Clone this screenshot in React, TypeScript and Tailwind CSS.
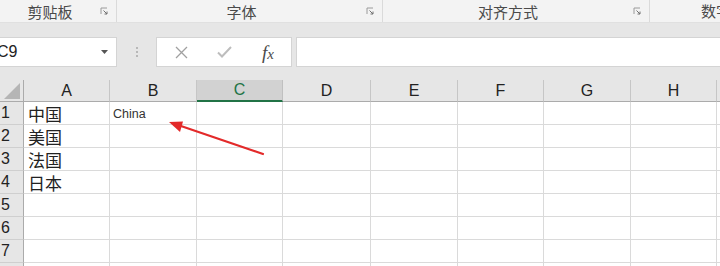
import React from 'react';

const COLS = [
  { name: 'A', w: 86 },
  { name: 'B', w: 87 },
  { name: 'C', w: 86 },
  { name: 'D', w: 88 },
  { name: 'E', w: 87 },
  { name: 'F', w: 86 },
  { name: 'G', w: 87 },
  { name: 'H', w: 86 },
  { name: '', w: 40 },
];

const ROWS: Record<number, { a?: string; b?: string }> = {
  1: { a: '中国', b: 'China' },
  2: { a: '美国' },
  3: { a: '法国' },
  4: { a: '日本' },
};

const cjk = { fontFamily: '"Noto Sans CJK SC", "Noto Sans", sans-serif' };
const latin = { fontFamily: '"Liberation Sans", Arial, sans-serif' };

// little dialog launcher in the corner of a ribbon group
const Launcher = () => (
  <svg width="9" height="9" viewBox="0 0 9 9" className="shrink-0">
    <path d="M1 7V1h6" fill="none" stroke="#9a9a9a" strokeWidth="1" />
    <path d="M3.5 3.5l3.5 3.5M7 4.5V7H4.5" fill="none" stroke="#707070" strokeWidth="1" />
  </svg>
);

const RibbonGroup: React.FC<{ label: string; w: number }> = ({ label, w }) => (
  <div className="flex items-center h-full border-r border-[#dadada] shrink-0 pr-[7px]" style={{ width: w }}>
    <div className="flex-1 text-center text-[15px] text-[#4a4a4a] leading-none" style={cjk}>{label}</div>
    <Launcher />
  </div>
);

export default function App() {
  return (
    <div className="relative w-[720px] h-[266px] overflow-hidden bg-[#e6e6e6]">
      {/* ribbon group labels */}
      <div className="flex h-[23px] bg-[#f3f3f3] border-b border-[#e0e0e0]">
        <RibbonGroup label="剪贴板" w={117} />
        <RibbonGroup label="字体" w={266} />
        <RibbonGroup label="对齐方式" w={267} />
        <div className="flex items-center h-full pl-[51px] text-[15px] text-[#4a4a4a] whitespace-nowrap" style={cjk}>数字</div>
      </div>

      {/* formula bar */}
      <div className="flex items-stretch h-[30px] mt-[14px]">
        <div className="w-[117px] bg-white border border-l-0 border-[#d4d4d4] flex items-center justify-between pr-[8px]">
          <span className="text-[16px] text-[#222] -ml-[3px]" style={latin}>C9</span>
          <svg width="7" height="4" viewBox="0 0 7 4"><path d="M0 0h7L3.5 4z" fill="#555" /></svg>
        </div>
        <div className="w-[39px] flex flex-col items-center justify-center gap-[2px]">
          <span className="w-[2px] h-[2px] bg-[#a8a8a8] rounded-full" />
          <span className="w-[2px] h-[2px] bg-[#a8a8a8] rounded-full" />
          <span className="w-[2px] h-[2px] bg-[#a8a8a8] rounded-full" />
        </div>
        <div className="w-[136px] bg-white border border-[#d4d4d4] flex items-center">
          <svg width="13" height="13" viewBox="0 0 13 13" className="ml-[18px]">
            <path d="M1 1l11 11M12 1L1 12" stroke="#a0a0a0" strokeWidth="1.3" />
          </svg>
          <svg width="15" height="12" viewBox="0 0 15 12" className="ml-[29px]">
            <path d="M1 6.5l4 4L14 1" fill="none" stroke="#bdbdbd" strokeWidth="2" />
          </svg>
          <span className="ml-[30px] text-[19px] italic text-[#4a4a4a] leading-none" style={{ fontFamily: '"Liberation Serif", serif' }}>
            f<span className="text-[15px]">x</span>
          </span>
        </div>
        <div className="flex-1 ml-[4px] bg-white border border-r-0 border-[#d4d4d4]" />
      </div>

      {/* sheet */}
      <div className="mt-[13px] bg-white">
        {/* column headers */}
        <div className="flex h-[22px]">
          <div className="w-[24px] shrink-0 bg-[#e6e6e6] border-r border-b border-[#ababab] relative">
            <svg width="16" height="16" viewBox="0 0 16 16" className="absolute right-[3px] bottom-[2px]">
              <path d="M16 0V16H0z" fill="#b5b5b5" />
            </svg>
          </div>
          {COLS.map((c) => (
            <div
              key={c.name || 'x'}
              className={
                c.name === 'C'
                  ? 'shrink-0 flex items-center justify-center bg-[#d2d2d2] border-r border-[#c0c0c0] border-b-2 border-b-[#217346] text-[#217346] text-[16px]'
                  : 'shrink-0 flex items-center justify-center bg-[#e6e6e6] border-r border-[#c6c6c6] border-b border-b-[#ababab] text-[#222] text-[16px]'
              }
              style={{ width: c.w, ...latin }}
            >
              {c.name}
            </div>
          ))}
        </div>

        {[1, 2, 3, 4, 5, 6, 7, 8].map((r) => (
          <div key={r} className="flex h-[23px]">
            <div className="w-[24px] shrink-0 bg-[#e6e6e6] border-r border-[#ababab] border-b border-b-[#cfcfcf] flex items-center pl-[1px] text-[16px] text-[#222]" style={latin}>
              {r < 8 ? r : ''}
            </div>
            {COLS.map((c) => (
              <div key={c.name || 'x'} className="shrink-0 border-r border-b border-[#dadada] flex items-end overflow-visible whitespace-nowrap" style={{ width: c.w }}>
                {c.name === 'A' && ROWS[r]?.a && (
                  <span className="pl-[4px] text-[17px] leading-[21px] text-[#222]" style={cjk}>{ROWS[r].a}</span>
                )}
                {c.name === 'B' && ROWS[r]?.b && (
                  <span className="pl-[3px] pb-[3px] text-[12.5px] leading-[14px] text-[#333]" style={latin}>{ROWS[r].b}</span>
                )}
              </div>
            ))}
          </div>
        ))}
      </div>

      {/* red annotation arrow */}
      <svg className="absolute left-0 top-0 pointer-events-none" width="720" height="266">
        <path d="M263 154L178 125" stroke="#e32a2a" strokeWidth="2.2" strokeLinecap="round" />
        <path d="M169 122L183 121.5L180 132z" fill="#e32a2a" />
      </svg>
    </div>
  );
}
